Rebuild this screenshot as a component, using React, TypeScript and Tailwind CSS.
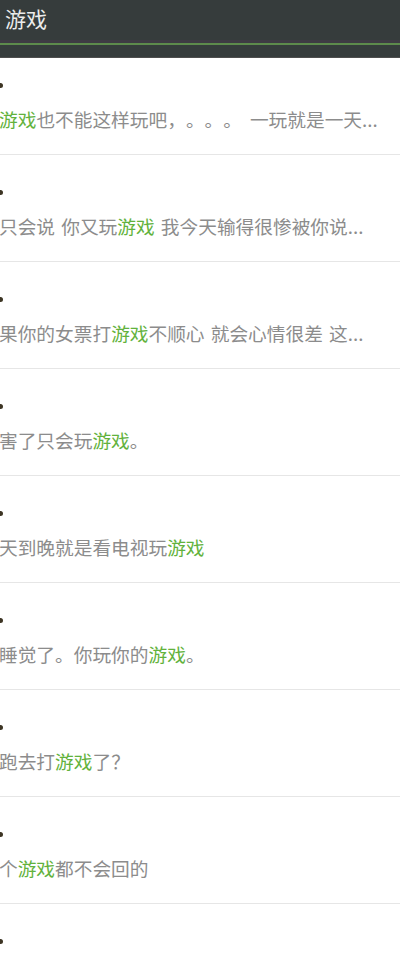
const items: { pre: string; hit: string; post: string }[] = [
  { pre: '', hit: '游戏', post: '也不能这样玩吧' },
  { pre: '只会说 你又玩', hit: '游戏', post: ' 我今天输得很惨被你说...' },
  { pre: '果你的女票打', hit: '游戏', post: '不顺心 就会心情很差 这...' },
  { pre: '害了只会玩', hit: '游戏', post: '' },
  { pre: '天到晚就是看电视玩', hit: '游戏', post: '' },
  { pre: '睡觉了', hit: '', post: '' },
  { pre: '跑去打', hit: '游戏', post: '了' },
  { pre: '个', hit: '游戏', post: '都不会回的' },
  { pre: '说', hit: '游戏', post: '' },
]

// full-width punctuation cell, so commas and stops keep a CJK-wide slot
function P({ c }: { c: string }) {
  return <span className="inline-block w-[18.7px]">{c}</span>
}

function Row({ i, pre, hit, post, first }: { i: number; pre: string; hit: string; post: string; first?: boolean }) {
  return (
    <div className={`border-b border-[#e6e6e6] pb-[23px] ${first ? 'pt-[25px]' : 'pt-[35px]'}`}>
      <div className="h-[5px] w-[3px] rounded-r-full bg-[#3d3524]" />
      <p className="mt-[19px] -ml-[1px] h-[24px] whitespace-nowrap overflow-hidden text-[18.7px] leading-[24px] text-[#8c8c8c] [word-spacing:2px]">
        {pre}
        {i === 5 && (
          <>
            <P c="。" />你玩你的
          </>
        )}
        {hit && <span className="text-[#62b23c]">{hit}</span>}
        {i === 5 && <span className="text-[#62b23c]">游戏</span>}
        {post}
        {i === 0 && (
          <>
            <P c="，" />
            <P c="。" />
            <P c="。" />
            <P c="。" />
            <span className="ml-[8px]">一玩就是一天...</span>
          </>
        )}
        {(i === 3 || i === 5) && <P c="。" />}
        {i === 6 && <P c="？" />}
      </p>
    </div>
  )
}

export default function App() {
  return (
    <div className="min-h-screen bg-white font-['Noto_Sans_CJK_SC',sans-serif] overflow-hidden">
      <header className="h-[58px] bg-[#363c3c] flex flex-col border-b border-[#4e4e4e]">
        <div className="h-[40px] flex items-center pl-[5px] pb-[3px]">
          <h1 className="text-[21px] text-[#ececec]">游戏</h1>
        </div>
        <div className="h-[3px] bg-[#3e3b43]" />
        <div className="h-[2px] bg-[#5d8a4c]" />
      </header>

      {items.map((it, i) => (
        <Row key={i} i={i} {...it} first={i === 0} />
      ))}
    </div>
  )
}
